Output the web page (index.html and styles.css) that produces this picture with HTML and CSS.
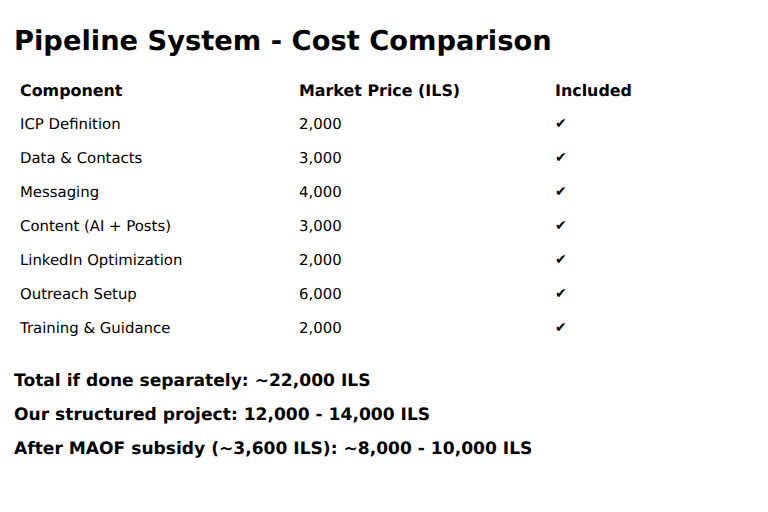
FILE: index.html
```html
<!DOCTYPE html>
<html>
<head>
<meta charset="utf-8">
<link rel="stylesheet" href="styles.css">
</head>
<body>
<main class="page">
  <h1 class="title">Pipeline System - Cost Comparison</h1>
  <table class="costs">
    <thead>
      <tr><th class="c1">Component</th><th class="c2">Market Price (ILS)</th><th class="c3">Included</th></tr>
    </thead>
    <tbody>
      <tr><td>ICP Definition</td><td>2,000</td><td class="check">✔</td></tr>
      <tr><td>Data &amp; Contacts</td><td>3,000</td><td class="check">✔</td></tr>
      <tr><td>Messaging</td><td>4,000</td><td class="check">✔</td></tr>
      <tr><td>Content (AI + Posts)</td><td>3,000</td><td class="check">✔</td></tr>
      <tr><td>LinkedIn Optimization</td><td>2,000</td><td class="check">✔</td></tr>
      <tr><td>Outreach Setup</td><td>6,000</td><td class="check">✔</td></tr>
      <tr><td>Training &amp; Guidance</td><td>2,000</td><td class="check">✔</td></tr>
    </tbody>
  </table>
  <div class="summary">
    <p>Total if done separately: ~22,000 ILS</p>
    <p>Our structured project: 12,000 - 14,000 ILS</p>
    <p>After MAOF subsidy (~3,600 ILS): ~8,000 - 10,000 ILS</p>
  </div>
</main>
</body>
</html>
```

FILE: styles.css
```css
html, body {
  margin: 0;
  padding: 0;
  background: #fff;
}
body {
  font-family: "DejaVu Sans", sans-serif;
  color: #000;
  text-rendering: geometricPrecision;
}
.page {
  padding: 24px 14px 0 14px;
}
.title {
  margin: 0;
  font-size: 27.3px;
  font-weight: bold;
  line-height: 36px;
}
.costs {
  border-collapse: collapse;
  margin-top: 13px;
  font-size: 14.9px;
}
.costs th, .costs td {
  padding: 0 6px;
  height: 34px;
  text-align: left;
  vertical-align: middle;
}
.costs th {
  font-weight: bold;
  font-size: 15.9px;
}
.c1 { width: 267px; }
.c2 { width: 244px; }
.c3 { width: 120px; }
.check {
  font-size: 14px;
}
.summary {
  margin-top: 19px;
  font-size: 17.1px;
  font-weight: bold;
}
.summary p {
  margin: 0;
  line-height: 34px;
}
```
